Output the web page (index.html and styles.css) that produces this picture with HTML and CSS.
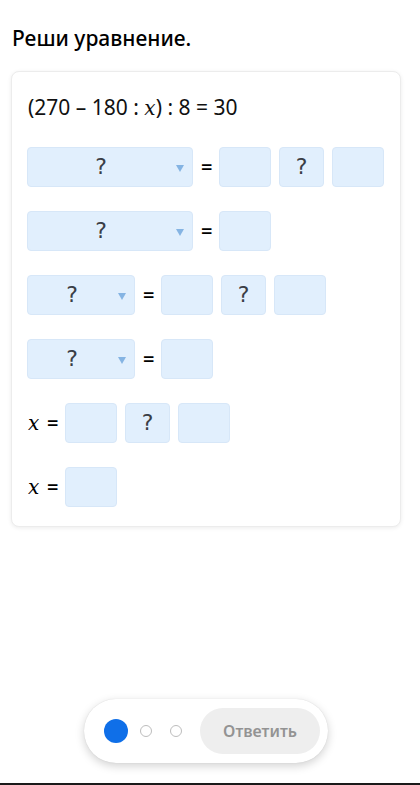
FILE: index.html
```html
<!DOCTYPE html>
<html lang="ru">
<head>
<meta charset="utf-8">
<title>Реши уравнение</title>
<link rel="stylesheet" href="styles.css">
</head>
<body>
<div class="page">
  <h1 class="title">Реши уравнение.</h1>
  <div class="card">
    <div class="equation">(270 – 180 : <span class="mx">x</span>) : 8 = 30</div>
    <div class="row">
      <div class="select wide"><span class="q">?</span><span class="arrow"></span></div>
      <span class="eq">=</span>
      <div class="box"></div>
      <div class="box op"><span class="q">?</span></div>
      <div class="box"></div>
    </div>
    <div class="row">
      <div class="select wide"><span class="q">?</span><span class="arrow"></span></div>
      <span class="eq">=</span>
      <div class="box"></div>
    </div>
    <div class="row">
      <div class="select narrow"><span class="q">?</span><span class="arrow"></span></div>
      <span class="eq">=</span>
      <div class="box"></div>
      <div class="box op"><span class="q">?</span></div>
      <div class="box"></div>
    </div>
    <div class="row">
      <div class="select narrow"><span class="q">?</span><span class="arrow"></span></div>
      <span class="eq">=</span>
      <div class="box"></div>
    </div>
    <div class="row">
      <span class="mx var">x</span>
      <span class="eq">=</span>
      <div class="box"></div>
      <div class="box op"><span class="q">?</span></div>
      <div class="box"></div>
    </div>
    <div class="row">
      <span class="mx var">x</span>
      <span class="eq">=</span>
      <div class="box"></div>
    </div>
  </div>
  <div class="spacer"></div>
  <div class="pill">
    <span class="dot active"></span>
    <span class="dot first"></span>
    <span class="dot"></span>
    <button class="answer" type="button">Ответить</button>
  </div>
  <div class="bottom-bar"></div>
</div>
</body>
</html>
```

FILE: styles.css
```css
* { box-sizing: border-box; }
html, body { margin: 0; padding: 0; background: #fff; }
body {
  font-family: "Noto Sans", "Open Sans", sans-serif;
  color: #000;
}
.page {
  height: 785px;
  display: flex;
  flex-direction: column;
}
.title {
  margin: 26px 0 0 12px;
  font-size: 21px;
  line-height: 24px;
  font-weight: 500;
  color: #000;
}
.card {
  margin: 21px 19px 0 11px;
  padding: 15px 15px 19px 15px;
  border: 1px solid #ececec;
  border-radius: 8px;
  box-shadow: 0 1px 4px rgba(0, 0, 0, 0.08);
  background: #fff;
  display: flex;
  flex-direction: column;
  gap: 24px;
}
.equation {
  font-size: 21px;
  line-height: 40px;
  height: 40px;
  margin-bottom: -4px;
  padding-left: 1px;
  color: #111;
}
.mx {
  font-family: "DejaVu Serif", "Liberation Serif", serif;
  font-style: italic;
  font-size: 20px;
}
.row {
  display: flex;
  align-items: center;
  gap: 8px;
  height: 40px;
}
.eq {
  width: 10px;
  text-align: center;
  font-size: 20px;
  font-weight: 600;
  line-height: 40px;
}
.var {
  width: 12px;
  padding-left: 1px;
  line-height: 40px;
}
.box, .select {
  height: 40px;
  background: #e1effd;
  border: 1px solid #d7e7f8;
  border-radius: 4px;
}
.box {
  width: 52px;
  display: flex;
  align-items: center;
  justify-content: center;
}
.box.op { width: 45px; }
.select {
  position: relative;
  display: flex;
  align-items: center;
  justify-content: center;
  padding-right: 18px;
}
.select.wide { width: 166px; }
.select.narrow { width: 108px; }
.q {
  font-family: "DejaVu Sans", "Verdana", sans-serif;
  font-size: 22px;
  line-height: 1;
  color: #3a3e46;
}
.arrow {
  position: absolute;
  right: 8px;
  top: 17px;
  width: 0;
  height: 0;
  border-left: 4px solid transparent;
  border-right: 4px solid transparent;
  border-top: 7px solid #85b4e3;
}
.spacer { flex: 1; }
.pill {
  align-self: flex-start;
  margin: 0 0 20px 84px;
  width: 244px;
  height: 64px;
  border-radius: 32px;
  background: #fff;
  box-shadow: 0 3px 10px rgba(0, 0, 0, 0.18), 0 0 1px rgba(0, 0, 0, 0.15);
  display: flex;
  align-items: center;
  padding: 0 8px 0 20px;
}
.dot {
  width: 12px;
  height: 12px;
  border-radius: 50%;
  border: 1px solid #bdbdbd;
  background: #fff;
  margin-left: 18px;
}
.dot.first { margin-left: 12px; }
.dot.active {
  width: 24px;
  height: 24px;
  border: none;
  background: #0f6fe8;
  margin-left: 0;
}
.answer {
  margin-left: auto;
  width: 120px;
  height: 46px;
  border: none;
  border-radius: 23px;
  background: #eeeeee;
  color: #939393;
  font-family: "Noto Sans", "Open Sans", sans-serif;
  font-size: 16px;
  font-weight: 600;
  padding: 0;
}
.bottom-bar {
  height: 2px;
  background: #1a1a1a;
}
```
